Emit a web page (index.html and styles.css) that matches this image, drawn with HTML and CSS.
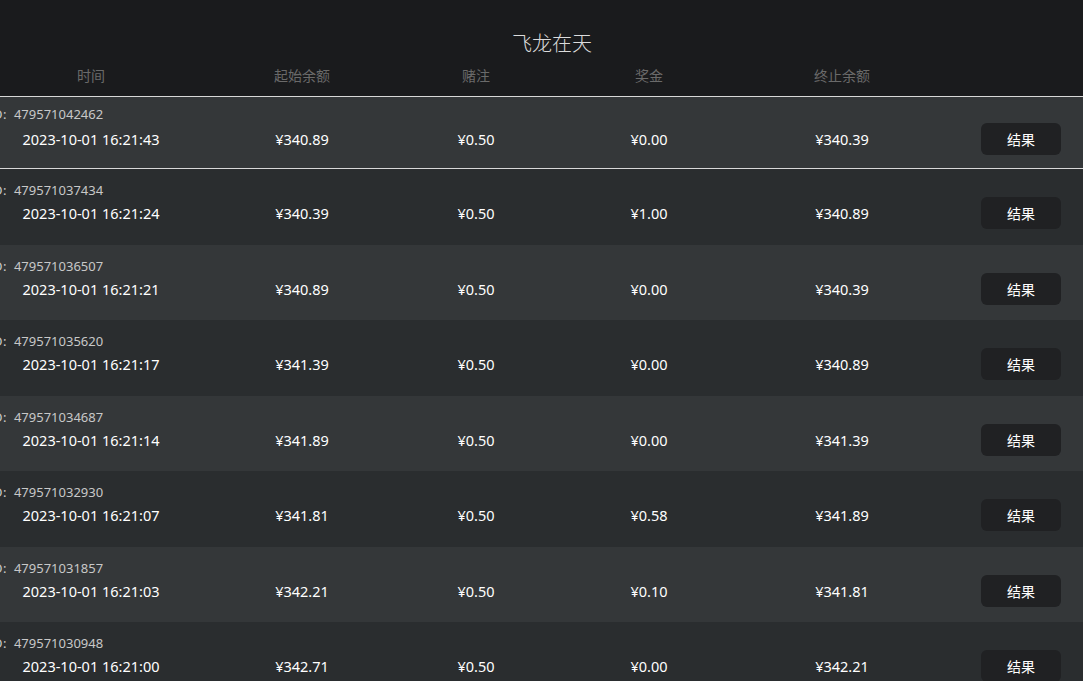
FILE: index.html
```html
<!DOCTYPE html>
<html lang="zh">
<head>
<meta charset="utf-8">
<link rel="stylesheet" href="styles.css">
</head>
<body>
<div class="page">
  <header class="head">
    <h1 class="title">飞龙在天</h1>
    <div class="cols cols-head">
      <span>时间</span><span>起始余额</span><span>赌注</span><span>奖金</span><span>终止余额</span><span></span>
    </div>
  </header>
  <div class="rows">
    <div class="row light first">
      <div class="id"><span class="idlabel">ID:</span>479571042462</div>
      <div class="cols vals"><span>2023-10-01 16:21:43</span><span>¥340.89</span><span>¥0.50</span><span>¥0.00</span><span>¥340.39</span><span><button class="btn">结果</button></span></div>
    </div>
    <div class="row dark">
      <div class="id"><span class="idlabel">ID:</span>479571037434</div>
      <div class="cols vals"><span>2023-10-01 16:21:24</span><span>¥340.39</span><span>¥0.50</span><span>¥1.00</span><span>¥340.89</span><span><button class="btn">结果</button></span></div>
    </div>
    <div class="row light">
      <div class="id"><span class="idlabel">ID:</span>479571036507</div>
      <div class="cols vals"><span>2023-10-01 16:21:21</span><span>¥340.89</span><span>¥0.50</span><span>¥0.00</span><span>¥340.39</span><span><button class="btn">结果</button></span></div>
    </div>
    <div class="row dark">
      <div class="id"><span class="idlabel">ID:</span>479571035620</div>
      <div class="cols vals"><span>2023-10-01 16:21:17</span><span>¥341.39</span><span>¥0.50</span><span>¥0.00</span><span>¥340.89</span><span><button class="btn">结果</button></span></div>
    </div>
    <div class="row light">
      <div class="id"><span class="idlabel">ID:</span>479571034687</div>
      <div class="cols vals"><span>2023-10-01 16:21:14</span><span>¥341.89</span><span>¥0.50</span><span>¥0.00</span><span>¥341.39</span><span><button class="btn">结果</button></span></div>
    </div>
    <div class="row dark">
      <div class="id"><span class="idlabel">ID:</span>479571032930</div>
      <div class="cols vals"><span>2023-10-01 16:21:07</span><span>¥341.81</span><span>¥0.50</span><span>¥0.58</span><span>¥341.89</span><span><button class="btn">结果</button></span></div>
    </div>
    <div class="row light">
      <div class="id"><span class="idlabel">ID:</span>479571031857</div>
      <div class="cols vals"><span>2023-10-01 16:21:03</span><span>¥342.21</span><span>¥0.50</span><span>¥0.10</span><span>¥341.81</span><span><button class="btn">结果</button></span></div>
    </div>
    <div class="row dark">
      <div class="id"><span class="idlabel">ID:</span>479571030948</div>
      <div class="cols vals"><span>2023-10-01 16:21:00</span><span>¥342.71</span><span>¥0.50</span><span>¥0.00</span><span>¥342.21</span><span><button class="btn">结果</button></span></div>
    </div>
  </div>
</div>
</body>
</html>
```

FILE: styles.css
```css
html, body {
  margin: 0;
  padding: 0;
  background: #2a2d2f;
  overflow: hidden;
}
body {
  font-family: "Noto Sans", "Noto Sans CJK SC", sans-serif;
  color: #fff;
}
.page {
  width: 1083px;
  height: 681px;
  overflow: hidden;
}
.head {
  background: #1a1b1d;
  height: 96px;
  border-bottom: 1px solid #d8d8d8;
  display: flex;
  flex-direction: column;
}
.title {
  margin: 0;
  padding-top: 29px;
  padding-left: 21px;
  height: 27px;
  line-height: 27px;
  font-family: "Noto Sans CJK SC", sans-serif;
  font-weight: 300;
  font-size: 20px;
  color: #dcdcdc;
  text-align: center;
}
.cols {
  display: grid;
  grid-template-columns: 182px 240px 108px 238px 148px 210px;
  align-items: center;
}
.cols > span {
  text-align: center;
  white-space: nowrap;
  display: flex;
  justify-content: center;
}
.cols-head {
  margin-top: 7px;
  height: 24px;
  font-family: "Noto Sans CJK SC", sans-serif;
  font-size: 14px;
  color: #6a6a6a;
}
.row {
  box-sizing: border-box;
  height: 75.5px;
  padding-top: 13px;
  display: flex;
  flex-direction: column;
}
.row.first {
  height: 72px;
  padding-top: 9px;
  border-bottom: 1px solid #d8d8d8;
}
.light { background: #343739; }
.dark { background: #2a2d2f; }
.id {
  height: 16px;
  line-height: 16px;
  font-size: 13px;
  color: #c8c8c8;
  margin-left: -12px;
  white-space: nowrap;
}
.idlabel {
  letter-spacing: 0.5px;
  margin-right: 7px;
}
.vals {
  height: 32px;
  margin-top: -1px;
  font-size: 14.5px;
  font-weight: 400;
  color: #fff;
}
.row.first .vals {
  margin-top: 1px;
}
.btn {
  width: 80px;
  height: 32px;
  border: none;
  border-radius: 6px;
  background: #202123;
  color: #fff;
  font-family: "Noto Sans CJK SC", sans-serif;
  font-size: 14px;
  padding: 0;
}
```
